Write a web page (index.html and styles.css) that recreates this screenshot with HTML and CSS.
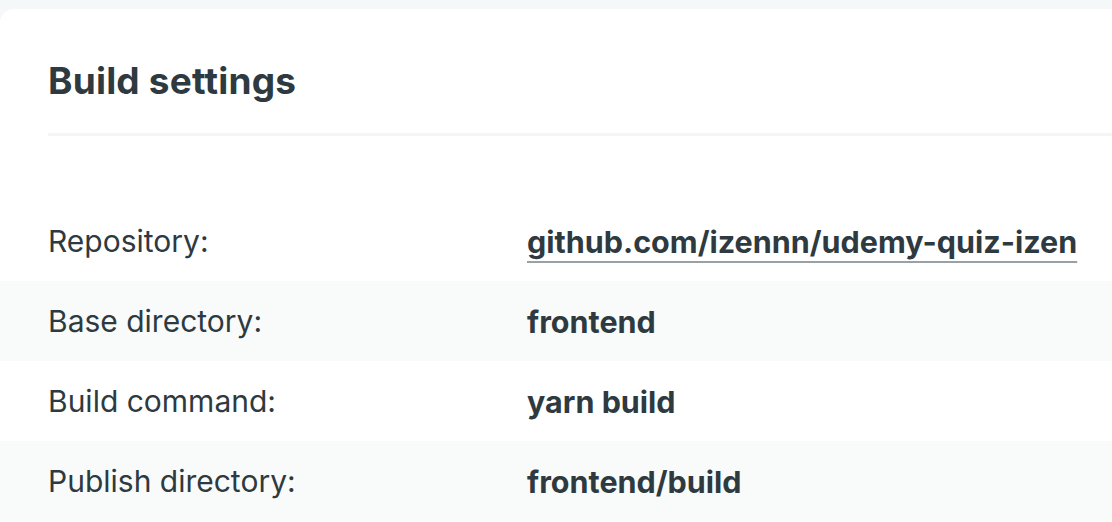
FILE: index.html
```html
<!DOCTYPE html>
<html lang="en">
<head>
<meta charset="utf-8">
<title>Build settings</title>
<link rel="stylesheet" href="styles.css">
</head>
<body>
<div class="page">
  <section class="card">
    <header class="card-header">
      <h2 class="card-title">Build settings</h2>
    </header>
    <dl class="settings">
      <div class="row">
        <dt class="label">Repository:</dt>
        <dd class="value"><a class="link" href="#">github.com/izennn/udemy-quiz-izen</a></dd>
      </div>
      <div class="row alt">
        <dt class="label">Base directory:</dt>
        <dd class="value">frontend</dd>
      </div>
      <div class="row">
        <dt class="label">Build command:</dt>
        <dd class="value">yarn build</dd>
      </div>
      <div class="row alt">
        <dt class="label">Publish directory:</dt>
        <dd class="value">frontend/build</dd>
      </div>
    </dl>
  </section>
</div>
</body>
</html>
```

FILE: styles.css
```css
html, body {
  margin: 0;
  padding: 0;
}
body {
  background: #f5f8f9;
  font-family: Inter, "Noto Sans", sans-serif;
  color: #2e3a3f;
  overflow: hidden;
  height: 522px;
}
.page {
  padding-top: 9px;
  width: 1140px;
}
.card {
  background: #ffffff;
  border-radius: 14px 0 0 0;
  height: 513px;
}
.card-header {
  margin-left: 48px;
  padding-top: 54px;
  height: 70px;
  box-sizing: content-box;
  border-bottom: 3px solid #f3f5f6;
}
.card-title {
  margin: 0;
  font-size: 37px;
  font-weight: 700;
  line-height: 36px;
  letter-spacing: 0.2px;
}
.settings {
  margin: 65px 0 0 0;
}
.row {
  display: flex;
  align-items: center;
  height: 80px;
  padding-left: 48px;
}
.row.alt {
  background: #f9fafa;
}
.label {
  width: 479px;
  font-size: 30px;
  font-weight: 400;
}
.value {
  margin: 0;
  font-size: 30.5px;
  font-weight: 700;
}
.link {
  color: inherit;
  text-decoration: underline;
  text-decoration-color: #9aa1a5;
  text-decoration-thickness: 2px;
  text-underline-offset: 8px;
  text-decoration-skip-ink: none;
}
```
